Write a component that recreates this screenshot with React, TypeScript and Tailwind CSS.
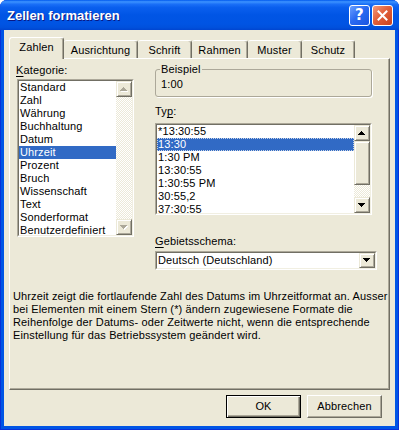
import React from "react";

function ArrowUp({ disabled }: { disabled?: boolean }) {
  const c = disabled ? "#ACA899" : "#000";
  return (
    <svg width="8" height="5" viewBox="0 0 8 5" shapeRendering="crispEdges">
      {disabled && (
        <g fill="#fff">
          <rect x="4" y="1" width="1" height="1" />
          <rect x="3" y="2" width="3" height="1" />
          <rect x="2" y="3" width="5" height="1" />
          <rect x="1" y="4" width="7" height="1" />
        </g>
      )}
      <g fill={c}>
        <rect x="3" y="0" width="1" height="1" />
        <rect x="2" y="1" width="3" height="1" />
        <rect x="1" y="2" width="5" height="1" />
        <rect x="0" y="3" width="7" height="1" />
      </g>
    </svg>
  );
}

function ArrowDown({ disabled }: { disabled?: boolean }) {
  const c = disabled ? "#ACA899" : "#000";
  return (
    <svg width="8" height="5" viewBox="0 0 8 5" shapeRendering="crispEdges">
      {disabled && (
        <g fill="#fff">
          <rect x="1" y="1" width="7" height="1" />
          <rect x="2" y="2" width="5" height="1" />
          <rect x="3" y="3" width="3" height="1" />
          <rect x="4" y="4" width="1" height="1" />
        </g>
      )}
      <g fill={c}>
        <rect x="0" y="0" width="7" height="1" />
        <rect x="1" y="1" width="5" height="1" />
        <rect x="2" y="2" width="3" height="1" />
        <rect x="3" y="3" width="1" height="1" />
      </g>
    </svg>
  );
}

function SBtn({ children, h }: { children: React.ReactNode; h?: string }) {
  return (
    <div
      className={
        "w-[16px] shrink-0 flex items-center justify-center bg-[#ECE9D8] border border-t-[#ECE9D8] border-l-[#ECE9D8] border-r-[#716F64] border-b-[#716F64] shadow-[inset_1px_1px_0_#fff,inset_-1px_-1px_0_#ACA899] " +
        (h ? h : "h-[16px]")
      }
    >
      {children}
    </div>
  );
}

function Sunken({ className, children }: { className: string; children: React.ReactNode }) {
  return (
    <div
      className={
        "border border-t-[#ACA899] border-l-[#ACA899] border-r-white border-b-white " + className
      }
    >
      <div className="w-full h-full border border-t-[#716F64] border-l-[#716F64] border-r-[#F1EFE2] border-b-[#F1EFE2] bg-white flex overflow-hidden">
        {children}
      </div>
    </div>
  );
}

const checker =
  "bg-[conic-gradient(#fff_0_25%,#ECE9D8_0_50%,#fff_0_75%,#ECE9D8_0_100%)] bg-[length:2px_2px]";

const kategorien = [
  "Standard",
  "Zahl",
  "Währung",
  "Buchhaltung",
  "Datum",
  "Uhrzeit",
  "Prozent",
  "Bruch",
  "Wissenschaft",
  "Text",
  "Sonderformat",
  "Benutzerdefiniert",
];

const typen = ["*13:30:55", "13:30", "1:30 PM", "13:30:55", "1:30:55 PM", "30:55,2", "37:30:55"];

const tabs: [string, string][] = [
  ["Zahlen", "w-[55px]"],
  ["Ausrichtung", "w-[74px]"],
  ["Schrift", "w-[54px]"],
  ["Rahmen", "w-[56px]"],
  ["Muster", "w-[54px]"],
  ["Schutz", "w-[53px]"],
];

export default function App() {
  return (
    <div className="w-[399px] h-[430px] bg-white font-['Liberation_Sans',Arial,sans-serif] text-[11px] leading-[13px] tracking-[0.13px] text-black">
      <div className="w-[399px] h-[430px] flex flex-col rounded-t-[7px] overflow-hidden bg-[#0055E5] shadow-[inset_1px_0_0_#0831D9,inset_-1px_0_0_#0831D9,inset_0_-1px_0_#0831D9]">
        {/* Title bar */}
        <div className="h-[30px] shrink-0 flex items-center pl-[7px] pr-[6px] bg-[linear-gradient(to_bottom,#0058EE_0%,#3D93FF_6%,#1A6FF7_14%,#0A5FEE_25%,#0055E5_50%,#0054E3_80%,#0050DC_92%,#0045D0_100%)]">
          <div className="flex-1 text-white font-bold text-[13px] tracking-normal font-['Liberation_Sans',Arial,sans-serif] [text-shadow:1px_1px_0_#0A1883] pt-[1px]">
            Zellen formatieren
          </div>
          <div className="w-[21px] h-[21px] rounded-[3px] border border-white bg-[linear-gradient(135deg,#6AA0FF_0%,#2A6BF2_45%,#1A55E0_100%)] flex items-center justify-center text-white font-bold text-[15px] leading-none font-['DejaVu_Sans',sans-serif]">
            ?
          </div>
          <div className="w-[21px] h-[21px] ml-[2px] rounded-[3px] border border-white bg-[linear-gradient(135deg,#F39A7C_0%,#E2603B_45%,#C9411C_100%)] flex items-center justify-center">
            <svg width="11" height="11" viewBox="0 0 11 11">
              <path d="M1.5 1.5 L9.5 9.5 M9.5 1.5 L1.5 9.5" stroke="#fff" strokeWidth="2" strokeLinecap="square" />
            </svg>
          </div>
        </div>

        {/* Client */}
        <div className="flex-1 ml-[4px] mr-[4px] mb-[4px] bg-[#ECE9D8] flex flex-col">
          {/* Tabs */}
          <div className="h-[28px] shrink-0 flex items-end pl-[5px]">
            {tabs.map(([t, w], i) =>
              i === 0 ? (
                <div
                  key={t}
                  className={
                    w +
                    " h-[22px] relative z-10 mb-[-1px] bg-[#ECE9D8] rounded-t-[3px] border-l border-t border-r border-l-white border-t-white border-r-[#716F64] shadow-[inset_-1px_0_0_#ACA899] flex items-center justify-center pb-[2px]"
                  }
                >
                  {t}
                </div>
              ) : (
                <div
                  key={t}
                  className={
                    w +
                    " h-[18px] bg-[#ECE9D8] rounded-t-[3px] border-t border-r border-t-white border-r-[#716F64] shadow-[inset_-1px_0_0_#ACA899] flex items-center justify-center pt-[1px]"
                  }
                >
                  {t}
                </div>
              )
            )}
          </div>

          {/* Panel */}
          <div className="ml-[5px] w-[381px] h-[332px] shrink-0 border border-t-white border-l-white border-r-[#716F64] border-b-[#716F64] shadow-[inset_-1px_-1px_0_#ACA899] pl-[6px] pt-[5px] flex flex-col">
            <div className="flex">
              {/* Left column */}
              <div className="w-[118px] flex flex-col">
                <div className="h-[13px]">
                  <span className="underline underline-offset-[2px]">K</span>ategorie:
                </div>
                <Sunken className="mt-[2px] ml-[1px] w-[117px] h-[158px]">
                  <div className="flex-1 flex flex-col">
                    {kategorien.map((k) => (
                      <div
                        key={k}
                        className={
                          k === "Uhrzeit"
                            ? "h-[13px] pl-[1px] whitespace-nowrap bg-[#316AC5] text-white"
                            : "h-[13px] pl-[1px] whitespace-nowrap"
                        }
                      >
                        {k}
                      </div>
                    ))}
                  </div>
                  <div className="w-[16px] flex flex-col">
                    <SBtn>
                      <ArrowUp disabled />
                    </SBtn>
                    <div className={"flex-1 " + checker}></div>
                    <SBtn>
                      <ArrowDown disabled />
                    </SBtn>
                  </div>
                </Sunken>
              </div>

              {/* Right column */}
              <div className="ml-[21px] w-[222px] flex flex-col mt-[-1px]">
                <fieldset className="w-[217px] h-[34px] border border-[#ACA899] rounded-[3px] shadow-[1px_1px_0_#fff] px-[5px]">
                  <legend className="px-[1px] ml-[-1px] h-[13px]">Beispiel</legend>
                  <div className="pt-[2px]">1:00</div>
                </fieldset>

                <div className="mt-[8px] h-[13px]">
                  Ty<span className="underline underline-offset-[2px]">p</span>:
                </div>
                <Sunken className="mt-[5px] w-[217px] h-[92px]">
                  <div className="flex-1 flex flex-col">
                    {typen.map((k, i) => (
                      <div
                        key={i}
                        className={
                          i === 1
                            ? "h-[13px] shrink-0 pl-[1px] whitespace-nowrap bg-[#316AC5] text-white outline outline-1 outline-dotted outline-[#C9D4E6] -outline-offset-1"
                            : "h-[13px] shrink-0 pl-[1px] whitespace-nowrap"
                        }
                      >
                        {k}
                      </div>
                    ))}
                  </div>
                  <div className="w-[16px] flex flex-col">
                    <SBtn>
                      <ArrowUp />
                    </SBtn>
                    <SBtn h="h-[44px]">{null}</SBtn>
                    <div className={"flex-1 " + checker}></div>
                    <SBtn>
                      <ArrowDown />
                    </SBtn>
                  </div>
                </Sunken>

                <div className="mt-[20px] h-[13px]">
                  <span className="underline underline-offset-[2px]">G</span>ebietsschema:
                </div>
                <Sunken className="mt-[3px] w-[222px] h-[19px]">
                  <div className="flex-1 pl-[1px] flex items-center">Deutsch (Deutschland)</div>
                  <SBtn h="h-[15px]">
                    <ArrowDown />
                  </SBtn>
                </Sunken>
              </div>
            </div>

            <div className="mt-[20px] ml-[-3px] whitespace-nowrap">
              Uhrzeit zeigt die fortlaufende Zahl des Datums im Uhrzeitformat an. Ausser
              <br />
              bei Elementen mit einem Stern (*) ändern zugewiesene Formate die
              <br />
              Reihenfolge der Datums- oder Zeitwerte nicht, wenn die entsprechende
              <br />
              Einstellung für das Betriebssystem geändert wird.
            </div>
          </div>

          {/* Buttons */}
          <div className="mt-[5px] flex justify-end gap-[6px] pr-[13px]">
            <div className="w-[75px] h-[23px] border border-black bg-[#ECE9D8] shadow-[inset_1px_1px_0_#fff,inset_-1px_-1px_0_#716F64,inset_-2px_-2px_0_#ACA899] flex items-center justify-center">
              OK
            </div>
            <div className="w-[75px] h-[23px] bg-[#ECE9D8] border border-t-white border-l-white border-r-[#716F64] border-b-[#716F64] shadow-[inset_-1px_-1px_0_#ACA899] flex items-center justify-center">
              Abbrechen
            </div>
          </div>
        </div>
      </div>
    </div>
  );
}
